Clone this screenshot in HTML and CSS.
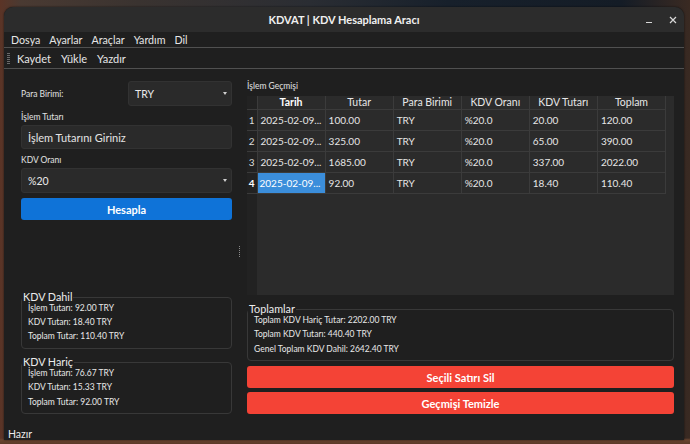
FILE: index.html
```
<!DOCTYPE html>
<html lang="tr">
<head>
<meta charset="utf-8">
<title>KDVAT | KDV Hesaplama Aracı</title>
<link rel="stylesheet" href="styles.css">
</head>
<body>
<div class="window">
  <div class="titlebar">
    <span class="title">KDVAT | KDV Hesaplama Aracı</span>
    <div class="controls">
      <svg width="8" height="8" viewBox="0 0 8 8"><line x1="1" y1="6.5" x2="7" y2="6.5" stroke="#d8d8d8" stroke-width="1.2"/></svg>
      <svg width="8" height="8" viewBox="0 0 8 8"><path d="M1 1L7 7M7 1L1 7" stroke="#d8d8d8" stroke-width="1.2"/></svg>
    </div>
  </div>
  <div class="menubar">
    <span>Dosya</span><span>Ayarlar</span><span>Araçlar</span><span>Yardım</span><span>Dil</span>
  </div>
  <div class="toolbar">
    <span class="handle"></span>
    <span>Kaydet</span><span>Yükle</span><span>Yazdır</span>
  </div>
  <div class="main">
    <div class="left">
      <div class="field-row">
        <span class="label">Para Birimi:</span>
        <div class="combo combo-small"><span>TRY</span><span class="arrow"></span></div>
      </div>
      <div class="label label-block">İşlem Tutarı</div>
      <div class="input">İşlem Tutarını Giriniz</div>
      <div class="label label-block">KDV Oranı</div>
      <div class="combo"><span>%20</span><span class="arrow"></span></div>
      <div class="btn btn-blue">Hesapla</div>
      <div class="spacer"></div>
      <div class="group">
        <div class="group-title">KDV Dahil</div>
        <div class="group-line">İşlem Tutarı: 92.00 TRY</div>
        <div class="group-line">KDV Tutarı: 18.40 TRY</div>
        <div class="group-line">Toplam Tutar: 110.40 TRY</div>
      </div>
      <div class="group group-gap">
        <div class="group-title">KDV Hariç</div>
        <div class="group-line">İşlem Tutarı: 76.67 TRY</div>
        <div class="group-line">KDV Tutarı: 15.33 TRY</div>
        <div class="group-line">Toplam Tutar: 92.00 TRY</div>
      </div>
    </div>
    <div class="splitter"><span class="split-handle"></span></div>
    <div class="right">
      <div class="label history-label">İşlem Geçmişi</div>
      <div class="table-view">
        <table>
          <colgroup><col class="c-num"><col><col><col><col><col><col></colgroup>
          <thead>
            <tr><th class="corner"></th><th class="current">Tarih</th><th>Tutar</th><th>Para Birimi</th><th>KDV Oranı</th><th>KDV Tutarı</th><th>Toplam</th></tr>
          </thead>
          <tbody>
            <tr><td class="num">1</td><td>2025-02-09...</td><td>100.00</td><td>TRY</td><td>%20.0</td><td>20.00</td><td>120.00</td></tr>
            <tr><td class="num">2</td><td>2025-02-09...</td><td>325.00</td><td>TRY</td><td>%20.0</td><td>65.00</td><td>390.00</td></tr>
            <tr><td class="num">3</td><td>2025-02-09...</td><td>1685.00</td><td>TRY</td><td>%20.0</td><td>337.00</td><td>2022.00</td></tr>
            <tr><td class="num current">4</td><td class="selected">2025-02-09...</td><td>92.00</td><td>TRY</td><td>%20.0</td><td>18.40</td><td>110.40</td></tr>
          </tbody>
        </table>
      </div>
      <div class="group totals">
        <div class="group-title">Toplamlar</div>
        <div class="group-line">Toplam KDV Hariç Tutar: 2202.00 TRY</div>
        <div class="group-line">Toplam KDV Tutarı: 440.40 TRY</div>
        <div class="group-line">Genel Toplam KDV Dahil: 2642.40 TRY</div>
      </div>
      <div class="btn btn-red btn-first">Seçili Satırı Sil</div>
      <div class="btn btn-red btn-second">Geçmişi Temizle</div>
    </div>
  </div>
  <div class="statusbar">Hazır</div>
</div>
</body>
</html>
```
FILE: styles.css
```
html, body {
  margin: 0;
  padding: 0;
}
body {
  width: 690px;
  height: 444px;
  overflow: hidden;
  font-family: Lato, "Noto Sans", "DejaVu Sans", sans-serif;
  background:
    linear-gradient(180deg, rgba(0,0,0,0) 0, rgba(0,0,0,0) 438px, #6a4530 440px, #5a3a28 444px),
    linear-gradient(90deg, #5b3426 0, #4a3a32 3%, #3a3330 20%, #2a2d33 45%, #17202b 65%, #141c26 90%, #3a2a22 100%);
}
.window {
  margin: 7px 0 0 4px;
  width: 680px;
  height: 433px;
  background: #1f1f1f;
  border-radius: 9px 9px 0 0;
  display: flex;
  flex-direction: column;
  overflow: hidden;
  color: #e6e6e6;
  box-shadow: 0 0 2px rgba(0,0,0,0.7);
}
.titlebar {
  height: 25px;
  flex: none;
  background: #2c2c2c;
  display: grid;
  grid-template-columns: 1fr auto 1fr;
  align-items: center;
}
.title {
  grid-column: 2;
  font-weight: 700;
  font-size: 11px;
  color: #f0f0f0;
}
.controls {
  grid-column: 3;
  justify-self: end;
  display: flex;
  align-items: center;
  gap: 16px;
  padding-right: 7px;
}
.controls svg {
  display: block;
}
.menubar {
  height: 15px;
  flex: none;
  border-bottom: 1px solid #505050;
  display: flex;
  align-items: center;
  gap: 9px;
  padding-left: 7px;
  font-size: 10.7px;
  line-height: 15px;
}
.toolbar {
  height: 20px;
  flex: none;
  border-bottom: 1px solid #505050;
  display: flex;
  align-items: center;
  gap: 10px;
  padding-left: 3px;
  font-size: 11px;
}
.handle {
  width: 3px;
  height: 11px;
  margin-right: -3px;
  background: repeating-linear-gradient(180deg, #6a6a6a 0 1px, transparent 1px 2px);
}
.main {
  flex: 1;
  min-height: 0;
  display: flex;
  padding: 12px 10px 6px 17px;
}
.left {
  width: 211px;
  flex: none;
  display: flex;
  flex-direction: column;
}
.field-row {
  height: 25px;
  display: flex;
  align-items: center;
  justify-content: space-between;
}
.label {
  font-size: 8.5px;
  color: #e2e2e2;
}
.label-block {
  height: 14px;
  line-height: 14px;
  margin-top: 4px;
}
.combo {
  height: 25px;
  box-sizing: border-box;
  background: #2a2a2a;
  border: 1px solid #323232;
  border-radius: 3px;
  display: flex;
  align-items: center;
  padding: 0 4px 0 6px;
  font-size: 10.5px;
  color: #eaeaea;
  margin-top: 1px;
}
.combo-small {
  width: 104px;
  margin-top: 0;
}
.arrow {
  margin-left: auto;
  width: 0;
  height: 0;
  border-left: 2.5px solid transparent;
  border-right: 2.5px solid transparent;
  border-top: 3px solid #cfcfcf;
}
.input {
  height: 24px;
  box-sizing: border-box;
  margin-top: 1px;
  background: #2a2a2a;
  border: 1px solid #323232;
  border-radius: 3px;
  padding-left: 6px;
  display: flex;
  align-items: center;
  font-size: 11px;
  color: #e4e4e4;
}
.btn {
  height: 22px;
  border-radius: 3px;
  display: flex;
  align-items: center;
  justify-content: center;
  font-weight: 700;
  font-size: 11px;
  color: #ffffff;
  flex: none;
}
.btn-blue {
  margin-top: 5px;
  background: #0f73d8;
}
.btn-red {
  background: #f44336;
}
.btn-first {
  margin-top: 5px;
}
.btn-second {
  margin-top: 4px;
}
.spacer {
  flex: 1;
}
.group {
  border: 1px solid #383838;
  border-radius: 4px;
  padding: 0 0 4px 0;
  flex: none;
}
.group-gap {
  margin-top: 13px;
}
.group-title {
  display: block;
  width: max-content;
  margin: -7px 0 -2px 0;
  padding: 0 1px;
  height: 12px;
  line-height: 12px;
  font-size: 10.8px;
  background: #1f1f1f;
  color: #ececec;
}
.group-line {
  font-size: 8.5px;
  line-height: 14.4px;
  padding-left: 6px;
  color: #e8e8e8;
}
.splitter {
  width: 15px;
  flex: none;
  display: flex;
  justify-content: center;
  align-items: center;
}
.split-handle {
  width: 1px;
  height: 11px;
  margin-top: 8px;
  background: repeating-linear-gradient(180deg, #8a8a8a 0 1px, transparent 1px 2px);
}
.right {
  flex: 1;
  min-width: 0;
  display: flex;
  flex-direction: column;
}
.history-label {
  height: 10px;
  line-height: 10px;
  margin-bottom: 5px;
  flex: none;
}
.table-view {
  flex: 1;
  min-height: 0;
  background: linear-gradient(90deg, #222222 10px, #2b2b2b 10px);
}
table {
  border-collapse: collapse;
  table-layout: fixed;
  width: 419px;
  font-size: 10px;
  color: #e6e6e6;
}
col {
  width: 68px;
}
col.c-num {
  width: 10px;
}
th {
  height: 13px;
  padding: 0;
  font-weight: 400;
  font-size: 10.5px;
  line-height: 13px;
  background: #2b2b2b;
  border-right: 1px solid #3b3b3b;
  border-bottom: 1px solid #3b3b3b;
  text-align: center;
  white-space: nowrap;
  overflow: hidden;
}
th.corner {
  background: #222222;
}
th.current {
  font-weight: 700;
  color: #ffffff;
}
td {
  height: 20px;
  padding: 0 0 0 3px;
  border-right: 1px solid #3b3b3b;
  border-bottom: 1px solid #3b3b3b;
  background: #2b2b2b;
  white-space: nowrap;
  overflow: hidden;
}
td.num {
  padding: 0;
  text-align: center;
  background: #222222;
  color: #dcdcdc;
}
td.num.current {
  font-weight: 700;
  color: #ffffff;
}
td.selected {
  background: #3b8edb;
  color: #ffffff;
  padding-left: 2px;
}
.totals {
  margin-top: 14px;
}
.statusbar {
  height: 20px;
  flex: none;
  box-sizing: border-box;
  padding: 8px 0 0 4px;
  line-height: 13px;
  font-size: 10.5px;
  color: #ececec;
}
```
